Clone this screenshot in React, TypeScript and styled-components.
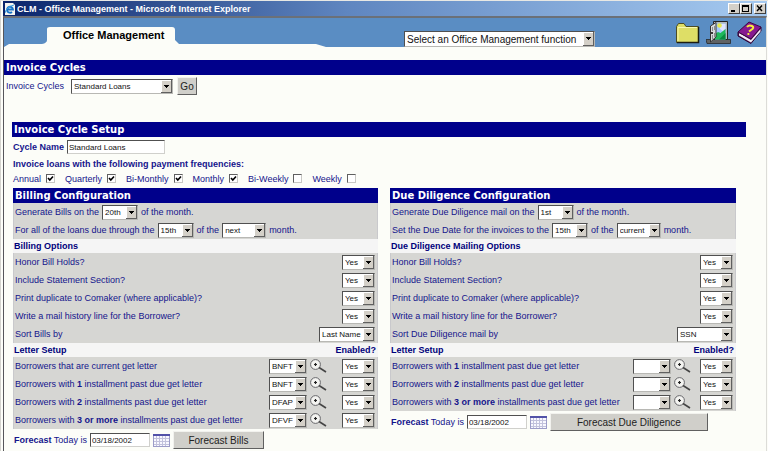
import React, { useId } from "react";
import styled, { createGlobalStyle } from "styled-components";

const Global = createGlobalStyle`
  * { box-sizing: border-box; }
  html, body { margin: 0; background: #fcfdf8; }
  body, button, input, select { font-family: "Liberation Sans", Arial, sans-serif; }
  #root { display: flex; min-height: 100vh; }
`;

const Window = styled.div`
  flex: 1;
  min-width: 0;
  border-left: 1px solid #d4d3ce;
  border-top: 1px solid #e8e8e4;
  font-size: 9px;
  color: #14148c;
`;

const TitleBar = styled.header`
  display: flex;
  align-items: center;
  gap: 2px;
  height: 15px;
  margin: 0 1px 0 2px;
  padding: 0 1px 0 2px;
  background: linear-gradient(90deg, #0a246a, #5f86c0 45%, #a6caf0);
  color: #fff;
`;

const WindowTitle = styled.h1`
  flex: 1;
  margin: 0;
  font-size: 9px;
  line-height: 14px;
`;

const CaptionButtons = styled.div`
  display: flex;
`;

const CaptionButton = styled.button<{ $apart?: boolean }>`
  width: 12px;
  height: 11px;
  margin-left: ${(p) => (p.$apart ? 2 : 0)}px;
  padding: 0;
  border: 1px solid;
  border-color: #fff #404040 #404040 #fff;
  background: #d4d0c8;
  svg { display: block; }
`;

const Client = styled.main`
  min-height: 434px;
  margin: 0 1px 0 2px;
  border-top: 2px solid #6b7078;
  border-left: 1px solid #55555a;
  border-right: 1px solid #dcdcd8;
  background: #fcfdf8;
`;

const Banner = styled.div`
  display: grid;
  grid-template-columns: 326fr 74fr 191fr 80fr 91px;
  align-items: end;
  height: 29px;
  margin-bottom: 13px;
  background: #5a8dc3;
`;

const TabArea = styled.div`
  display: grid;
  align-items: end;
  svg { grid-area: 1 / 1; display: block; width: 100%; height: 20px; }
`;

const TabLink = styled.a`
  grid-area: 1 / 1;
  padding-left: 59px;
  color: #000;
  font-size: 11px;
  font-weight: bold;
  line-height: 24px;
  text-decoration: none;
`;

const Tools = styled.nav`
  display: flex;
  align-items: center;
  gap: 6px;
  height: 29px;
`;

const ToolButton = styled.button`
  padding: 0;
  border: 0;
  background: none;
  svg { display: block; }
`;

const Bar = styled.h2`
  margin: 0;
  padding-left: 2px;
  background: #00008b;
  color: #fff;
  font: bold 10px/15px "DejaVu Sans", Verdana, sans-serif;
`;

const PickRow = styled.form`
  display: flex;
  align-items: center;
  gap: 4px;
  height: 18px;
  padding-left: 2px;
  margin-top: 2px;
`;

const PickLabel = styled.label`
  display: flex;
  align-items: center;
  gap: 7px;
`;

const Setup = styled.section`
  margin: 27px 20px 0 8px;
`;

const NameRow = styled.label`
  display: flex;
  align-items: center;
  gap: 3px;
  height: 20px;
  padding-left: 1px;
  font-weight: bold;
`;

const Frequencies = styled.fieldset`
  margin: 0;
  padding: 0 0 0 1px;
  border: 0;
`;

const Legend = styled.legend`
  padding: 0;
  font-weight: bold;
  line-height: 14px;
`;

const CheckList = styled.div`
  display: flex;
  gap: 10px;
  height: 17px;
  padding-bottom: 2px;
  align-items: center;
`;

const CheckLabel = styled.label`
  display: flex;
  align-items: center;
  gap: 5px;
`;

const CheckBox = styled.input`
  appearance: none;
  width: 9px;
  height: 9px;
  margin: 0;
  border: 1px solid;
  border-color: #606060 #c8c8c4 #c8c8c4 #606060;
  background: #fff;
`;

const CheckHolder = styled.span`
  display: grid;
  place-items: center;
  > * { grid-area: 1 / 1; }
  svg { display: none; pointer-events: none; }
  input:checked + svg { display: block; }
`;

const Columns = styled.div`
  display: grid;
  grid-template-columns: minmax(0, 365fr) minmax(0, 346fr);
  gap: 12px;
  align-items: start;
  padding: 0 10px 0 1px;
`;

const Block = styled.div`
  padding: 0 2px 0 1px;
  border: solid #c9c9cc;
  border-width: 0 1px;
  background: #d6d6d3;
`;

const Row = styled.div`
  display: flex;
  align-items: center;
  height: 18px;
  gap: 3px;
  white-space: nowrap;
`;

const Caption = styled.span`
  flex: 1;
`;

const SubHead = styled.h3`
  display: flex;
  justify-content: space-between;
  margin: 0;
  padding: 0 2px 0 1px;
  background: #f5f5f5;
  color: #00007b;
  font-size: 9px;
  line-height: 14px;
`;

const SelectFrame = styled.span<{ $w: number }>`
  display: grid;
  flex: none;
  width: ${(p) => p.$w}px;
  border: 1px solid;
  border-color: #505050 #b8b8b4 #b8b8b4 #505050;
  background: #fff;
  > * { grid-area: 1 / 1; }
  svg { justify-self: end; pointer-events: none; display: block; }
`;

const SelectBox = styled.select<{ $big?: boolean }>`
  appearance: none;
  width: 100%;
  min-width: 0;
  height: ${(p) => (p.$big ? 14 : 13)}px;
  padding: 0 0 0 2px;
  border: 0;
  background: #fff;
  color: #111;
  font-size: ${(p) => (p.$big ? 10 : 8)}px;
`;

const TextBox = styled.input<{ $w: number }>`
  width: ${(p) => p.$w}px;
  height: 14px;
  padding: 0 1px;
  border: 1px solid;
  border-color: #505050 #d0d0cc #d0d0cc #505050;
  background: #fff;
  color: #111;
  font-size: 8px;
`;

const PushButton = styled.button<{ $w: number }>`
  width: ${(p) => p.$w}px;
  height: 18px;
  padding: 0;
  border: 1px solid;
  border-color: #f2f2ee #606060 #606060 #f2f2ee;
  background: #d0cfca;
  color: #222;
  font-size: 10px;
`;

const IconButton = styled.button<{ $gap?: number }>`
  margin-right: ${(p) => p.$gap ?? 0}px;
  padding: 0;
  border: 0;
  background: none;
  svg { display: block; }
`;

const ForecastRow = styled.form`
  display: flex;
  align-items: center;
  gap: 3px;
  height: 22px;
  padding-left: 1px;
`;

const DateLabel = styled.label`
  display: flex;
  align-items: center;
  gap: 3px;
`;

function Select({ value, label, w, big }: { value: string; label: string; w: number; big?: boolean }) {
  const h = big ? 14 : 13;
  return (
    <SelectFrame $w={w}>
      <SelectBox aria-label={label} defaultValue={value} $big={big}>
        <option>{value}</option>
      </SelectBox>
      <svg width="11" height={h} viewBox={`0 0 11 ${h}`} shapeRendering="crispEdges">
        <path fill="#d4d0c8" d={`M0 0h11v${h}H0z`} />
        <path fill="none" stroke="#fff" d={`M.5 ${h}V.5H10`} />
        <path fill="none" stroke="#606060" d={`M0 ${h - 0.5}H10.5V0`} />
        <path fill="#000" d="M3 5h5v1H7v1H6v1H5V7H4V6H3z" />
      </svg>
    </SelectFrame>
  );
}

function Check({ label, on }: { label: string; on: boolean }) {
  const id = useId();
  return (
    <CheckLabel htmlFor={id}>
      {label}
      <CheckHolder>
        <CheckBox id={id} type="checkbox" defaultChecked={on} />
        <svg width="7" height="7" viewBox="0 0 7 7">
          <path d="M1 3L2.8 5 6 1.5" fill="none" stroke="#000" strokeWidth="1.6" />
        </svg>
      </CheckHolder>
    </CheckLabel>
  );
}

const Magnifier = () => (
  <svg width="17" height="14" viewBox="0 0 17 14">
    <circle cx="5.5" cy="5.5" r="4.9" fill="#f4f4f1" stroke="#66666a" />
    <path d="M4 5.500h3M5.500 4v3" stroke="#222" strokeWidth="1.200" />
    <path d="M9 8.500L16 13" stroke="#444" strokeWidth="1.6" />
  </svg>
);

const Calendar = () => (
  <svg width="17" height="13" viewBox="0 0 17 13" shapeRendering="crispEdges">
    <path fill="#f8f8ff" stroke="#9c9cc8" d="M.5.5h16v12H.5z" />
    <path fill="#5252a8" d="M0 0h17v2H0z" />
    <path stroke="#c2c2dc" d="M3.5 2v10M6.5 2v10M9.5 2v10M12.5 2v10M1 4.5h15M1 7.5h15M1 10.5h15" />
  </svg>
);

function Options({ rows, sortLabel, sortValue }: { rows: string[]; sortLabel: string; sortValue: string }) {
  return (
    <Block>
      {rows.map((r) => (
        <Row key={r}>
          <Caption>{r}</Caption>
          <Select w={33} value="Yes" label={r} />
        </Row>
      ))}
      <Row>
        <Caption>{sortLabel}</Caption>
        <Select w={56} value={sortValue} label={sortLabel} />
      </Row>
    </Block>
  );
}

type Letter = { count?: string; noun?: string; code: string };

function Letters({ items, gap }: { items: Letter[]; gap: number }) {
  return (
    <Block>
      {items.map((l) => (
        <Row key={l.count ?? "current"}>
          <Caption>
            {l.count ? (
              <>
                Borrowers with <b>{l.count}</b> {l.noun} past due get letter
              </>
            ) : (
              "Borrowers that are current get letter"
            )}
          </Caption>
          <Select w={38} value={l.code} label="Letter" />
          <IconButton type="button" aria-label="Look up letter" $gap={gap}>
            <Magnifier />
          </IconButton>
          <Select w={33} value="Yes" label="Enabled" />
        </Row>
      ))}
    </Block>
  );
}

function Forecast({ action, w }: { action: string; w: number }) {
  return (
    <ForecastRow onSubmit={(e) => e.preventDefault()}>
      <DateLabel>
        <span>
          <b>Forecast</b> Today is
        </span>
        <TextBox $w={60} defaultValue="03/18/2002" />
      </DateLabel>
      <IconButton type="button" aria-label="Choose date">
        <Calendar />
      </IconButton>
      <PushButton $w={w}>{action}</PushButton>
    </ForecastRow>
  );
}

const optionRows = [
  "Honor Bill Holds?",
  "Include Statement Section?",
  "Print duplicate to Comaker (where applicable)?",
  "Write a mail history line for the Borrower?",
];

const pastDue = (codes: string[]): Letter[] => [
  { count: "1", noun: "installment", code: codes[0] },
  { count: "2", noun: "installments", code: codes[1] },
  { count: "3 or more", noun: "installments", code: codes[2] },
];

export default function App() {
  return (
    <>
      <Global />
      <Window>
        <TitleBar>
          <svg width="10" height="12" viewBox="0 0 10 12">
            <path fill="#f4f4f0" d="M0 0h8l2 2v10H0z" />
            <path d="M2 6.5h6A3 3 0 1 0 7 9" fill="none" stroke="#1673c8" strokeWidth="1.8" />
            <path d="M0 10Q1 4 9 2" fill="none" stroke="#3ea0e0" />
          </svg>
          <WindowTitle>CLM - Office Management - Microsoft Internet Explorer</WindowTitle>
          <CaptionButtons>
            <CaptionButton aria-label="Minimize">
              <svg width="10" height="9"><path d="M2 6h4v2H2z" /></svg>
            </CaptionButton>
            <CaptionButton aria-label="Maximize">
              <svg width="10" height="9" shapeRendering="crispEdges"><path d="M1 1h7v7H1zM2 3v4h5V3z" fillRule="evenodd" /></svg>
            </CaptionButton>
            <CaptionButton aria-label="Close" $apart>
              <svg width="10" height="9"><path d="M2 1.5l5 5.5M7 1.5L2 7" stroke="#000" strokeWidth="1.4" /></svg>
            </CaptionButton>
          </CaptionButtons>
        </TitleBar>
        <Client>
          <Banner>
            <TabArea>
              <svg viewBox="0 0 326 20" preserveAspectRatio="none">
                <path fill="#fcfdf8" d="M0 20L5 17H38Q43 16 43 13V2Q43 0 46 0H168Q171 0 171 3V13L175 17H312L322 20z" />
              </svg>
              <TabLink href="#office">Office Management</TabLink>
            </TabArea>
            <span />
            <Select w={191} value="Select an Office Management function" label="Function" big />
            <span />
            <Tools>
              <ToolButton aria-label="Folder">
                <svg width="25" height="22" viewBox="0 0 25 22">
                  <path d="M1.5 20.5V4.5L3.500 1.500H9L11 4.500H23.500V20.500z" fill="#dede66" stroke="#4d4d23" />
                  <path d="M3 19V5.500H22" fill="none" stroke="#f8f8ae" />
                  <path d="M2 20.500H23.500V5" fill="none" stroke="#1c1c10" strokeWidth="1.5" />
                </svg>
              </ToolButton>
              <ToolButton aria-label="Exit">
                <svg width="25" height="23" viewBox="0 0 25 23">
                  <path d="M0 18.500h24.500v4H1z" fill="#5f6264" stroke="#26282a" strokeWidth=".8" />
                  <path d="M7.500.5h14v18h-14z" fill="#b4b8bc" stroke="#222" />
                  <path d="M9 2.500h10.500v16H9z" fill="#a4c8ff" />
                  <path d="M13 3h6.500v5L17 10.500 14 8z" fill="#dfe4ff" />
                  <circle cx="13.500" cy="4.500" r="2.300" fill="#e8ea4a" />
                  <path d="M9 13l3-2 2.500 1L17 10l2.500-2v10.500H9z" fill="#1fb85a" />
                  <path d="M13 18.500l6.500-6.500v6.500z" fill="#0a8a40" />
                  <path d="M4.500 5L10 1.500V16l-5.500 5z" fill="#d8dadc" stroke="#333" />
                  <path d="M6.500 6v4M8.500 5v4M6.500 14v4M8.500 12v4" stroke="#8a8c8e" />
                  <circle cx="6" cy="12" r="1" />
                </svg>
              </ToolButton>
              <ToolButton aria-label="Help">
                <svg width="25" height="23" viewBox="0 0 25 23">
                  <path d="M1 11v4l13 7.500L24 10V6z" fill="#59105f" stroke="#2c0630" />
                  <path d="M2 12l12 7L23.500 8v2.500L14 21.500 2 14.500z" fill="#f3f1f5" />
                  <path d="M1 11L12 1l12 5L14 18z" fill="#871a8f" stroke="#3a0a40" />
                  <path d="M10 6Q12 3.500 15 5T14 9l-2 1.500M10.500 13h1.800" fill="none" stroke="#f6ef3a" strokeWidth="2" />
                </svg>
              </ToolButton>
            </Tools>
          </Banner>
          <Bar>Invoice Cycles</Bar>
          <PickRow onSubmit={(e) => e.preventDefault()}>
            <PickLabel>
              Invoice Cycles
              <Select w={102} value="Standard Loans" label="Invoice Cycles" />
            </PickLabel>
            <PushButton $w={20}>Go</PushButton>
          </PickRow>
          <Setup>
            <Bar>Invoice Cycle Setup</Bar>
            <NameRow>
              Cycle Name
              <TextBox $w={98} defaultValue="Standard Loans" />
            </NameRow>
            <Frequencies>
              <Legend>Invoice loans with the following payment frequencies:</Legend>
              <CheckList>
                <Check label="Annual" on />
                <Check label="Quarterly" on />
                <Check label="Bi-Monthly" on />
                <Check label="Monthly" on />
                <Check label="Bi-Weekly" on={false} />
                <Check label="Weekly" on={false} />
              </CheckList>
            </Frequencies>
            <Columns>
              <section>
                <Bar>Billing Configuration</Bar>
                <Block>
                  <Row>
                    Generate Bills on the <Select w={36} value="20th" label="Bill day" /> of the month.
                  </Row>
                  <Row>
                    For all of the loans due through the <Select w={36} value="15th" label="Due day" /> of the{" "}
                    <Select w={44} value="next" label="Due month" /> month.
                  </Row>
                </Block>
                <SubHead>Billing Options</SubHead>
                <Options rows={optionRows} sortLabel="Sort Bills by" sortValue="Last Name" />
                <SubHead>
                  Letter Setup <span>Enabled?</span>
                </SubHead>
                <Letters gap={12} items={[{ code: "BNFT" }, ...pastDue(["BNFT", "DFAP", "DFVF"])]} />
                <Forecast action="Forecast Bills" w={91} />
              </section>
              <section>
                <Bar>Due Diligence Configuration</Bar>
                <Block>
                  <Row>
                    Generate Due Diligence mail on the <Select w={36} value="1st" label="Mail day" /> of the month.
                  </Row>
                  <Row>
                    Set the Due Date for the invoices to the <Select w={36} value="15th" label="Due day" /> of the{" "}
                    <Select w={44} value="current" label="Due month" /> month.
                  </Row>
                </Block>
                <SubHead>Due Diligence Mailing Options</SubHead>
                <Options rows={optionRows} sortLabel="Sort Due Diligence mail by" sortValue="SSN" />
                <SubHead>
                  Letter Setup <span>Enabled?</span>
                </SubHead>
                <Letters gap={6} items={pastDue(["", "", ""])} />
                <Forecast action="Forecast Due Diligence" w={158} />
              </section>
            </Columns>
          </Setup>
        </Client>
      </Window>
    </>
  );
}
